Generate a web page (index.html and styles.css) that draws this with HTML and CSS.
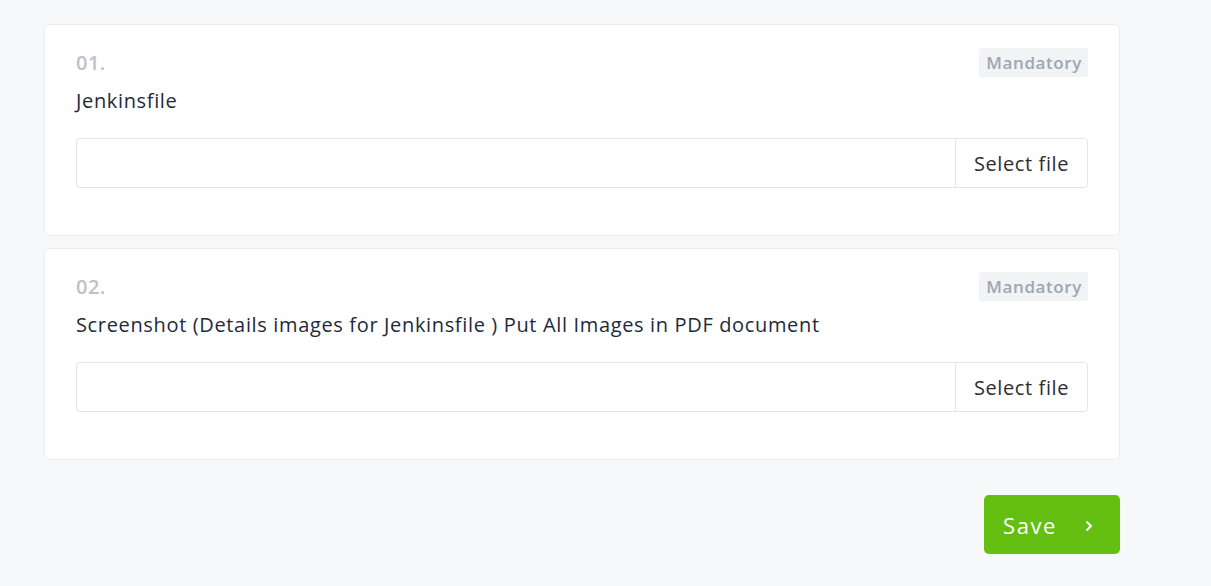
FILE: index.html
```html
<!DOCTYPE html>
<html>
<head>
<meta charset="utf-8">
<link rel="stylesheet" href="styles.css">
</head>
<body>
<div class="wrap">
  <div class="card">
    <div class="card-head">
      <span class="num">01.</span>
      <span class="badge">Mandatory</span>
    </div>
    <div class="title">Jenkinsfile</div>
    <div class="file-group">
      <div class="file-input"></div>
      <div class="file-btn">Select file</div>
    </div>
  </div>
  <div class="card">
    <div class="card-head">
      <span class="num">02.</span>
      <span class="badge">Mandatory</span>
    </div>
    <div class="title">Screenshot (Details images for Jenkinsfile ) Put All Images in PDF document</div>
    <div class="file-group">
      <div class="file-input"></div>
      <div class="file-btn">Select file</div>
    </div>
  </div>
  <div class="actions">
    <button class="save"><span>Save</span><svg class="chev" width="8" height="12" viewBox="0 0 8 12"><path d="M2 2 L6 6 L2 10" fill="none" stroke="#fff" stroke-width="2" stroke-linecap="round" stroke-linejoin="round"/></svg></button>
  </div>
</div>
</body>
</html>
```
FILE: styles.css
```css
html, body {
  margin: 0;
  padding: 0;
  background: #f7f8fa;
  font-family: "Open Sans", "Noto Sans", sans-serif;
  color: #1e2a3b;
}
.wrap {
  width: 1076px;
  margin-left: 44px;
  padding-top: 24px;
  display: flex;
  flex-direction: column;
  gap: 12px;
}
.card {
  background: #fff;
  border: 1px solid #eaedf0;
  border-radius: 6px;
  padding: 23px 31px 47px;
  width: 1076px;
  box-sizing: border-box;
}
.card-head {
  display: flex;
  justify-content: space-between;
  align-items: center;
  height: 29px;
}
.num {
  font-size: 20px;
  font-weight: 600;
  color: #bcc2c8;
  letter-spacing: 0.5px;
}
.badge {
  background: #f1f3f5;
  color: #9ea7b0;
  font-size: 17px;
  font-weight: 600;
  letter-spacing: 0.6px;
  height: 29px;
  line-height: 29px;
  padding: 0 6px 0 7px;
  border-radius: 3px;
}
.title {
  margin-top: 9px;
  font-size: 20px;
  letter-spacing: 0.65px;
  line-height: 30px;
  color: #1e2a3b;
}
.file-group {
  margin-top: 22px;
  display: flex;
  height: 50px;
  border: 1px solid #e3e5e8;
  border-radius: 4px;
  box-sizing: border-box;
}
.file-input {
  flex: 1;
}
.file-btn {
  width: 131px;
  border-left: 1px solid #e3e5e8;
  display: flex;
  align-items: center;
  justify-content: center;
  font-size: 20px;
  letter-spacing: 0.6px;
  color: #2b2f33;
}
.actions {
  display: flex;
  justify-content: flex-end;
  margin-top: 23px;
}
.save {
  width: 136px;
  height: 59px;
  background: #64bf12;
  border: none;
  border-radius: 5px;
  color: #fff;
  font-family: inherit;
  font-size: 22px;
  font-weight: 500;
  letter-spacing: 1.6px;
  padding: 0 0 0 19px;
  display: flex;
  align-items: center;
}
.chev {
  margin-left: 28px;
  margin-top: 2px;
}
```
